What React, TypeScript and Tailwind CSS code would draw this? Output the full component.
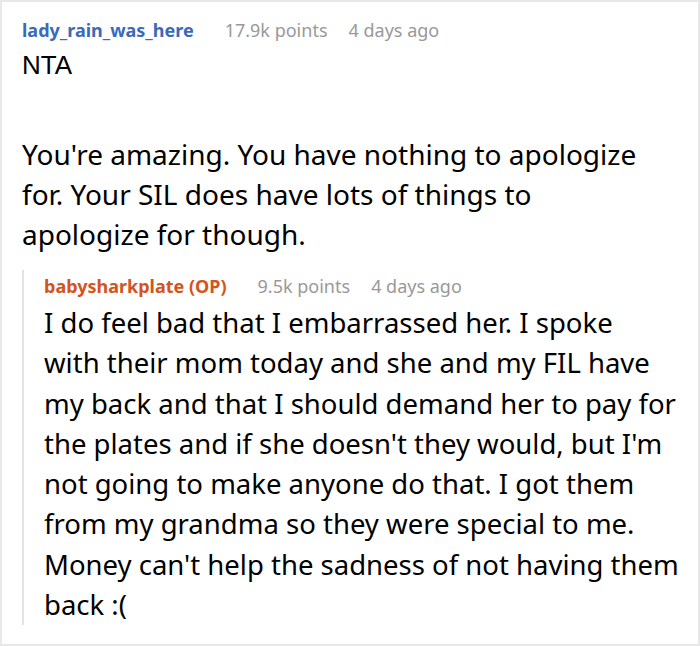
export default function App() {
  return (
    <div className="h-[646px] w-[700px] bg-white">
      <div className="box-border h-[646px] w-[700px] border-[2px] border-[#e8e8e8] bg-white pl-[20px] pr-[8px] pt-[14px] font-['Noto_Sans',sans-serif]">
        <div className="flex items-baseline whitespace-nowrap text-[18px] leading-[28px]">
          <span className="font-bold text-[#3a6ab8]">lady_rain_was_here</span>
          <span className="ml-[31px] text-[#999999]">17.9k points</span>
          <span className="ml-[21px] text-[#999999]">4 days ago</span>
        </div>
        <p className="mt-[1px] font-['Liberation_Sans',sans-serif] text-[26px] leading-[40px] text-black">
          NTA
        </p>
        <p className="mt-[49px] whitespace-nowrap text-[28px] leading-[40px] text-black">
          You're amazing. You have nothing to apologize
          <br />
          for. Your SIL does have lots of things to
          <br />
          apologize for though.
        </p>
        <div className="mt-[16px] border-l-[2px] border-[#e3e3e3] pl-[20px] pt-[2px]">
          <div className="flex items-baseline whitespace-nowrap text-[18px] leading-[28px]">
            <span className="font-bold text-[#d4541c]">babysharkplate (OP)</span>
            <span className="ml-[31px] text-[#999999]">9.5k points</span>
            <span className="ml-[21px] text-[#999999]">4 days ago</span>
          </div>
          <p className="mt-[3px] whitespace-nowrap text-[27.5px] leading-[40.3px] text-black">
            I do feel bad that I embarrassed her. I spoke
            <br />
            with their mom today and she and my FIL have
            <br />
            my back and that I should demand her to pay for
            <br />
            the plates and if she doesn't they would, but I'm
            <br />
            not going to make anyone do that. I got them
            <br />
            from my grandma so they were special to me.
            <br />
            Money can't help the sadness of not having them
            <br />
            back :(
          </p>
        </div>
      </div>
    </div>
  );
}
